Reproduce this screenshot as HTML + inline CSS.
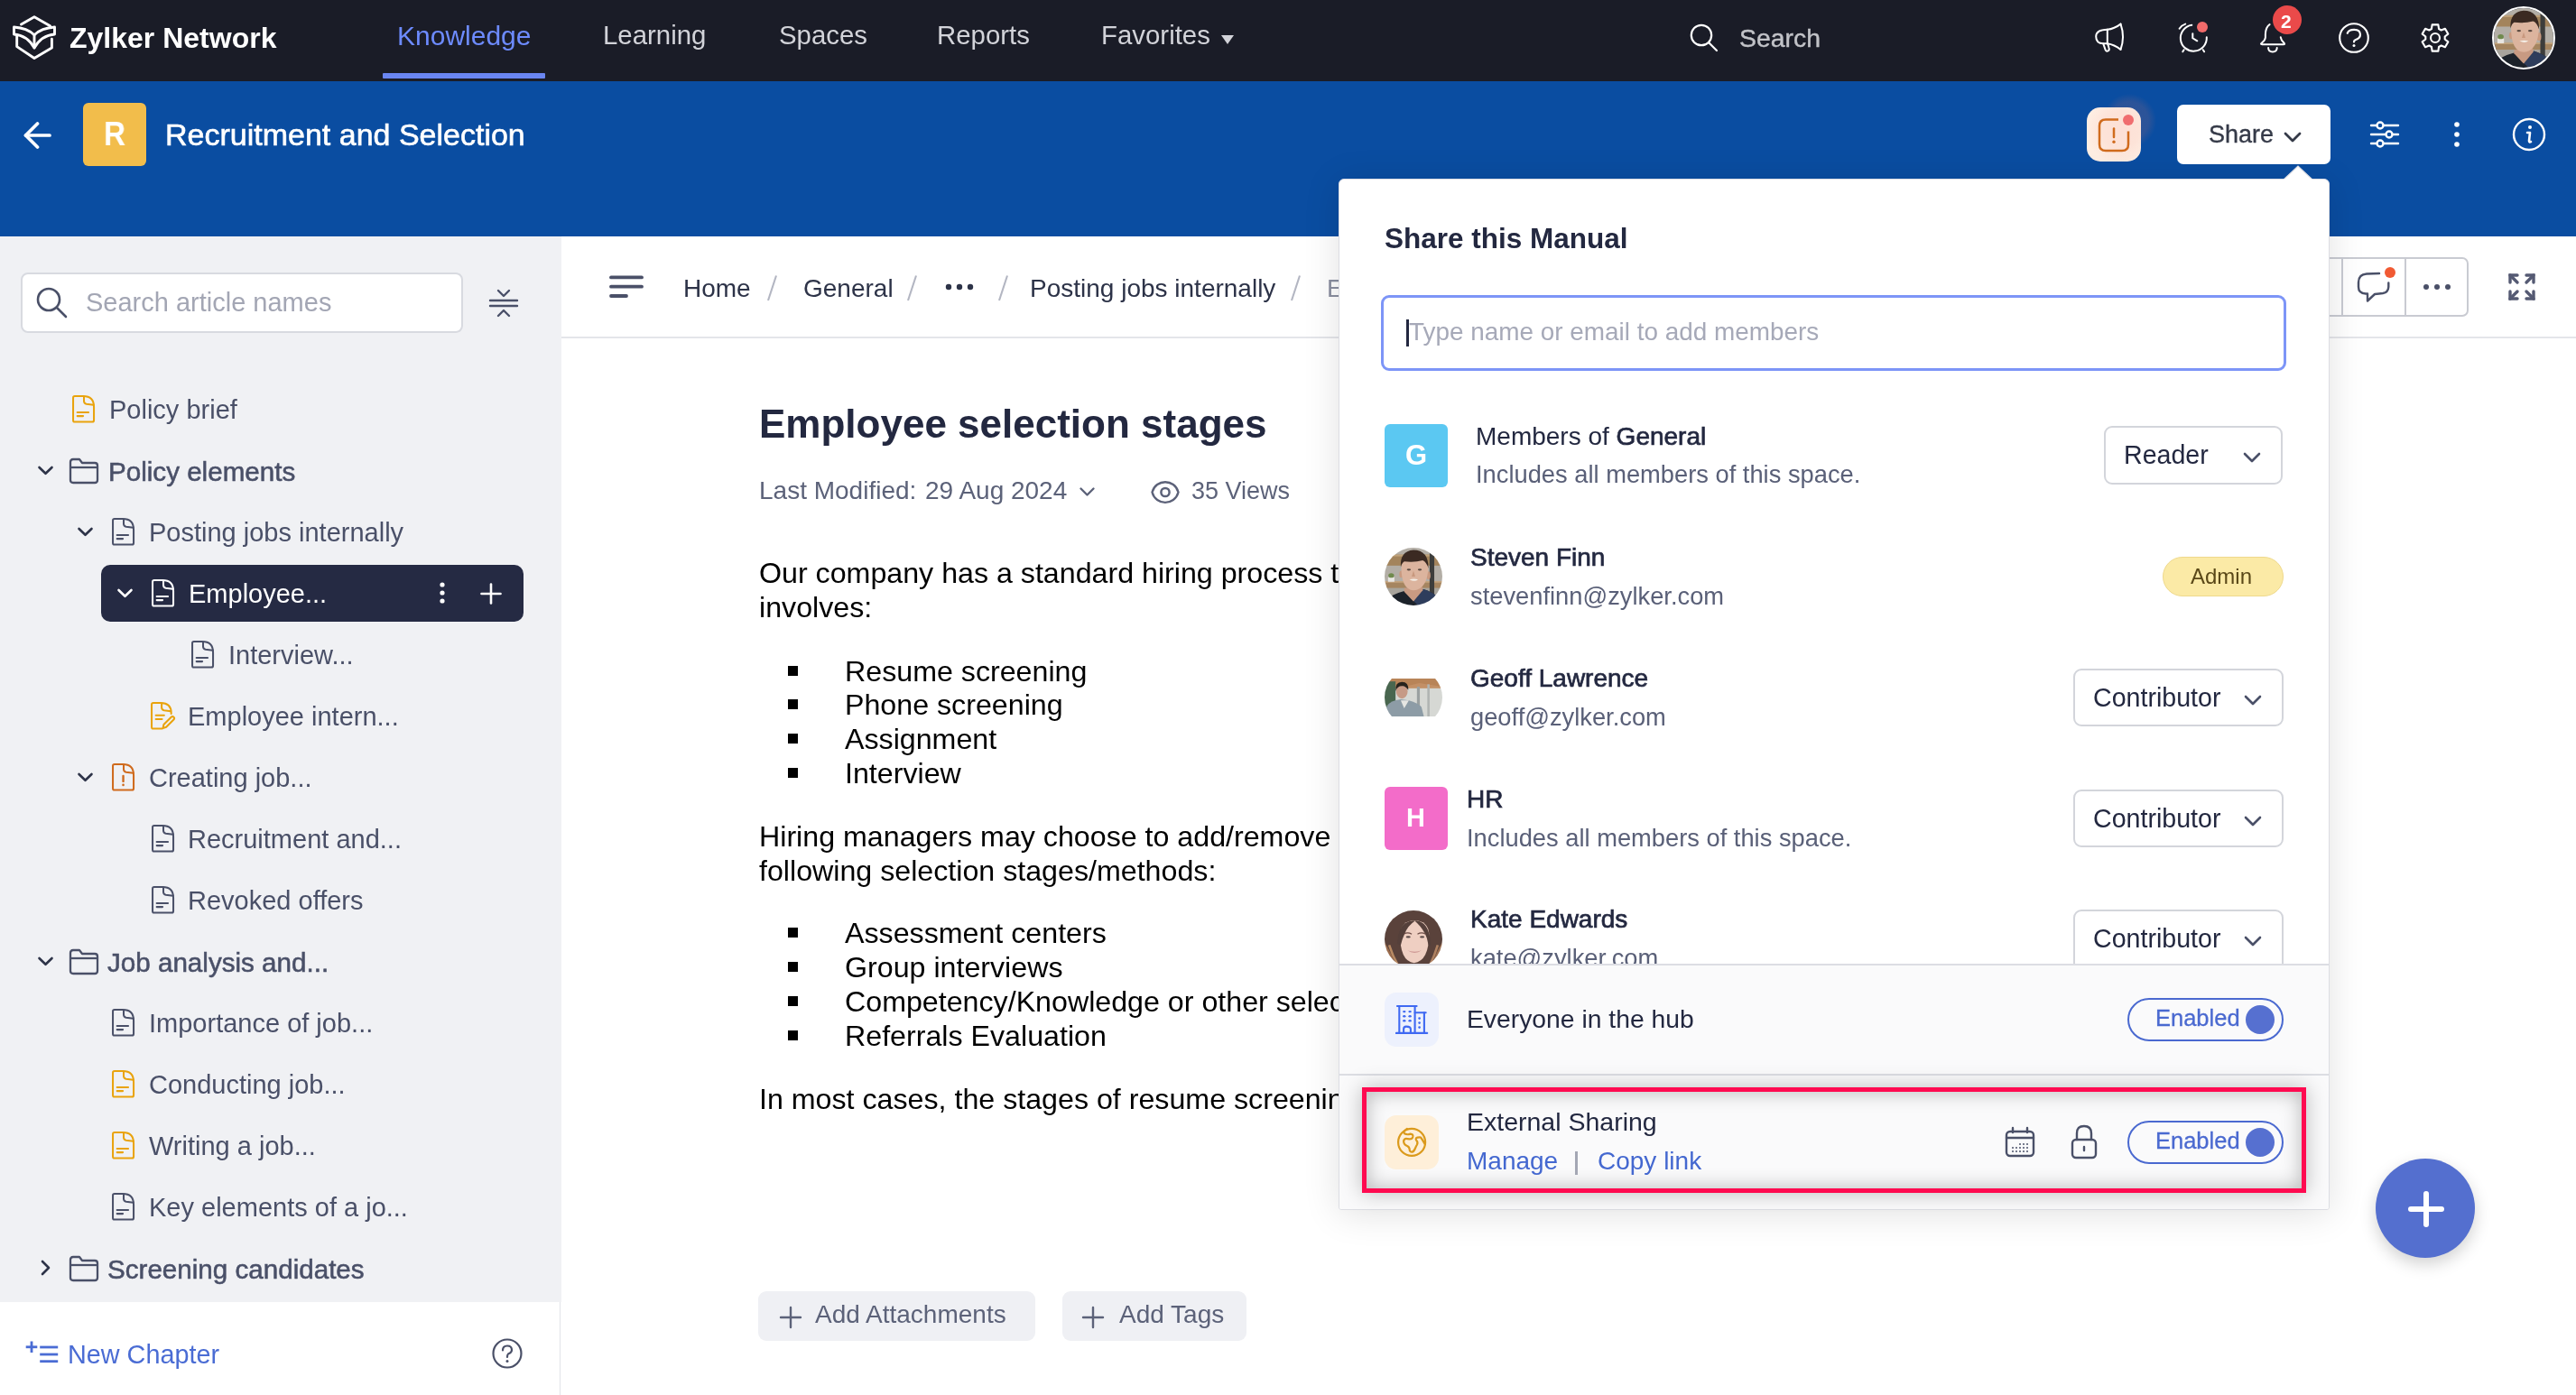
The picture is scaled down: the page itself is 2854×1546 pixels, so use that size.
<!DOCTYPE html>
<html><head><meta charset="utf-8"><style>
html,body{margin:0;padding:0;width:2854px;height:1546px;overflow:hidden;background:#fff;font-family:"Liberation Sans", sans-serif}
.t{position:absolute;white-space:nowrap;will-change:transform}
.r{position:absolute}
</style></head><body>
<div class="r" style="left:0px;top:0px;width:2854px;height:90px;background:#1a1c27"></div><svg class="r" style="left:0px;top:0px;" width="80" height="80" viewBox="0 0 80 80" fill="none"><g stroke="#fff" stroke-width="2.9" stroke-linejoin="round" stroke-linecap="round">
<path d="M23.5 27 L38 18.7 L55.5 28.8"/>
<path d="M15.5 30 L15.5 38 Q30 39 38 53 Q46 39 60.5 38 L60.5 30 Q46 31 38 38.7 Q30 31 15.5 30 Z"/>
<path d="M38 38.7 L38 53"/>
<path d="M18.7 40 L18.7 51.6 L38 64.5 L57.4 53 L57.4 43.2"/>
</g></svg><div class="t" style="left:77px;top:25.8px;font-size:32px;line-height:32px;color:#ffffff;font-weight:700;">Zylker Network</div><div class="t" style="left:440px;top:24.5px;font-size:30px;line-height:30px;color:#6d8bff;font-weight:400;">Knowledge</div><div class="r" style="left:424px;top:81px;width:180px;height:6px;background:#6a86f2;border-radius:1px"></div><div class="t" style="left:668px;top:24.0px;font-size:29.4px;line-height:29.4px;color:#d2d3d9;font-weight:400;">Learning</div><div class="t" style="left:863px;top:24.0px;font-size:29.4px;line-height:29.4px;color:#d2d3d9;font-weight:400;">Spaces</div><div class="t" style="left:1038px;top:24.0px;font-size:29.4px;line-height:29.4px;color:#d2d3d9;font-weight:400;">Reports</div><div class="t" style="left:1220px;top:24.0px;font-size:29.4px;line-height:29.4px;color:#d2d3d9;font-weight:400;">Favorites</div><svg class="r" style="left:1353px;top:39px;" width="14" height="10" viewBox="0 0 14 10" fill="none"><path d="M0 0 L14 0 L7 10 Z" fill="#d2d3d9"/></svg><svg class="r" style="left:1871px;top:25px;" width="34" height="34" viewBox="0 0 34 34" fill="none"><circle cx="14" cy="14" r="11.2" stroke="#fff" stroke-width="2.2"/><path d="M22 22 L31 31" stroke="#fff" stroke-width="2.2" stroke-linecap="round"/></svg><div class="t" style="left:1927px;top:27.9px;font-size:28.4px;line-height:28.4px;color:#c2c3c8;font-weight:400;-webkit-text-stroke:0.4px #c2c3c8;">Search</div><svg class="r" style="left:2318px;top:22px;" width="40" height="40" viewBox="0 0 40 40" fill="none"><g stroke="#fff" stroke-width="2" stroke-linejoin="round" stroke-linecap="round"><path d="M16.8 10.7 Q4.2 10.9 4.2 18.6 Q4.2 26.3 12.3 26.3 L16.8 26.3"/><path d="M16.8 10.7 L16.8 26.3"/><path d="M16.8 10.7 Q24.5 10 31.5 4.6"/><path d="M31.5 4.6 Q36.5 18.8 31.5 32.9"/><path d="M16.8 26.3 Q24.5 27.5 31.5 32.9"/><path d="M12.3 26.6 L14.6 33.2 Q15.6 35.4 17.6 34.4 Q19.4 33.4 18.5 31 L17.2 26.6"/></g></svg><svg class="r" style="left:2410px;top:22px;" width="40" height="40" viewBox="0 0 40 40" fill="none"><g stroke="#fff" stroke-width="2" stroke-linecap="round" fill="none"><path d="M18.3 5.8 A14.5 14.5 0 1 0 34.8 19.3"/><path d="M4.6 9.7 Q7 6 11.2 4.6"/><path d="M19.3 15.2 L19.3 20.3 L24.3 23.3"/><path d="M9.6 33.2 L8.3 35.3"/><path d="M30.8 33.2 L32.1 35.3"/></g><circle cx="30" cy="8" r="6" fill="#f26b6b"/></svg><svg class="r" style="left:2500px;top:22px;" width="40" height="40" viewBox="0 0 40 40" fill="none"><g stroke="#fff" stroke-width="2" stroke-linecap="round" stroke-linejoin="round" fill="none"><path d="M14.6 5.1 Q10.2 8 9.9 16 L9.9 19.5 Q9.6 22.8 6.2 25.2 Q3.6 27.3 6.4 27.3 L29.6 27.3 Q32.4 27.3 30 25 Q27.2 22.2 26.8 19.3"/><path d="M13.1 31 Q13.1 35.4 17.9 35.4 Q22.7 35.4 22.7 31"/></g></svg><div class="r" style="left:2518px;top:6px;width:32px;height:32px;background:#ea4a4a;border-radius:50%"></div><div class="t" style="left:2527px;top:13.2px;font-size:21px;line-height:21px;color:#fff;font-weight:700;">2</div><svg class="r" style="left:2589px;top:23px;" width="38" height="38" viewBox="0 0 38 38" fill="none"><circle cx="19" cy="19" r="15.8" stroke="#fff" stroke-width="2.1"/><path d="M11.7 13.8 Q13 9.8 19.2 9.8 Q26 9.8 26 15.3 Q26 19.5 20.5 21.3 Q19 22 19 23.5" stroke="#fff" stroke-width="2.2" stroke-linecap="round" fill="none"/><circle cx="19" cy="27.6" r="1.5" fill="#fff"/></svg><svg class="r" style="left:2680px;top:24px;" width="36" height="36" viewBox="0 0 36 36" fill="none"><path d="M13.95 7.99 L14.63 3.38 L21.37 3.38 L22.05 7.99 L24.65 9.49 L28.97 7.77 L32.34 13.61 L28.69 16.50 L28.69 19.50 L32.34 22.39 L28.97 28.23 L24.65 26.51 L22.05 28.01 L21.37 32.62 L14.63 32.62 L13.95 28.01 L11.35 26.51 L7.03 28.23 L3.66 22.39 L7.31 19.50 L7.31 16.50 L3.66 13.61 L7.03 7.77 L11.35 9.49 Z" stroke="#fff" stroke-width="2.1" stroke-linejoin="round" fill="none"/><circle cx="18" cy="18" r="5" stroke="#fff" stroke-width="2.1" fill="none"/></svg><svg width="0" height="0" style="position:absolute"><defs>
<clipPath id="cc100"><circle cx="50" cy="50" r="50"/></clipPath><filter id="soft" x="-5%" y="-5%" width="110%" height="110%"><feGaussianBlur stdDeviation="1.1"/></filter>
<symbol id="steven" viewBox="0 0 100 100"><g clip-path="url(#cc100)"><g filter="url(#soft)">
<rect width="100" height="100" fill="#b3aea6"/>
<rect x="0" y="12" width="100" height="19" fill="#a3845c"/>
<rect x="0" y="12" width="100" height="3" fill="#c0a27a"/>
<rect x="0" y="59" width="100" height="11" fill="#a58560"/>
<rect x="0" y="58" width="100" height="2.5" fill="#c4a47c"/>
<rect x="0" y="70" width="100" height="30" fill="#a8a49c"/>
<rect x="6" y="51" width="11" height="8" fill="#e8e6e2"/>
<ellipse cx="11.5" cy="48" rx="5" ry="4" fill="#6f8a4e"/>
<rect x="78" y="6" width="8" height="82" fill="#3e3d3b"/>
<path d="M13 100 L13 83 Q22 78 34 75 L50 92 L67 72 Q80 76 88 82 L92 100 Z" fill="#1d2029"/>
<path d="M50 92 L67 72 Q80 76 88 82 L92 100 L58 100 Z" fill="#2f3d5c"/>
<path d="M34 70 L34 76 L50 93 L66 74 L66 68 Z" fill="#c89a82"/>
<ellipse cx="29" cy="46" rx="3.5" ry="6" fill="#c99a80"/>
<ellipse cx="76" cy="48" rx="3.5" ry="7" fill="#c99a80"/>
<path d="M29 30 Q28 72 50 74 Q74 73 76 32 Q74 20 52 20 Q31 20 29 30 Z" fill="#dcb49e"/>
<path d="M28 34 Q26 6 50 4 Q76 4 76 36 Q72 24 66 22 Q52 26 34 24 Q30 26 28 34 Z" fill="#3a2c24"/>
<ellipse cx="42" cy="38" rx="3.5" ry="1.8" fill="#5a4a40"/>
<ellipse cx="61" cy="38" rx="3.5" ry="1.8" fill="#5a4a40"/>
<path d="M50 40 L47 50 L53 50 Z" fill="#c8987e"/>
<path d="M43 55 Q51 53 58 55 Q52 60 43 55 Z" fill="#f4eee6"/>
</g></g></symbol>
<symbol id="kate" viewBox="0 0 100 100"><g clip-path="url(#cc100)"><g filter="url(#soft)">
<rect width="100" height="100" fill="#5a433b"/>
<path d="M0 55 Q10 70 22 100 L0 100 Z" fill="#9a6c4e"/>
<path d="M100 55 Q90 70 80 100 L100 100 Z" fill="#9c7052"/>
<path d="M8 60 Q14 80 26 100" stroke="#b88a64" stroke-width="4" fill="none"/>
<path d="M92 60 Q86 80 76 100" stroke="#b08262" stroke-width="4" fill="none"/>
<path d="M27 40 Q26 88 51 91 Q77 88 77 40 Q75 18 52 17 Q29 18 27 40 Z" fill="#efcfc2"/>
<path d="M22 58 Q24 30 36 22 Q46 16 53 18 Q40 26 34 42 Q30 50 28 60 Z" fill="#54403a"/>
<path d="M80 60 Q78 30 66 22 Q58 16 52 18 Q62 26 70 40 Q74 48 76 60 Z" fill="#54403a"/>
<path d="M33 41 Q40 37 47 41" stroke="#6a4a44" stroke-width="2" fill="none"/>
<path d="M57 41 Q64 37 71 41" stroke="#6a4a44" stroke-width="2" fill="none"/>
<ellipse cx="41" cy="46" rx="4" ry="1.8" fill="#5a4a48"/>
<ellipse cx="65" cy="46" rx="4" ry="1.8" fill="#5a4a48"/>
<path d="M40 69 Q52 74 64 69 Q52 77 40 69 Z" fill="#c48686"/>
</g></g></symbol>
<symbol id="geoff" viewBox="0 0 100 66" preserveAspectRatio="none"><g clip-path="url(#cc100g)"><g filter="url(#soft)">
<rect width="100" height="66" fill="#d6d8d4"/>
<rect x="0" y="0" width="100" height="17" fill="#c39066"/>
<path d="M0 10 Q30 18 60 8 L100 14 L100 0 L0 0 Z" fill="#b88458"/>
<rect x="0" y="5" width="19" height="45" fill="#4a6650"/>
<rect x="56" y="14" width="5" height="52" fill="#9aa0a0"/>
<rect x="74" y="10" width="4" height="56" fill="#b0b4b2"/>
<path d="M2 66 L4 48 Q10 38 28 36 L42 38 Q58 42 64 50 L68 66 Z" fill="#8d9ca6"/>
<path d="M28 38 L34 52 L42 38 Z" fill="#e6e6e2"/>
<ellipse cx="30" cy="22" rx="10" ry="13" fill="#c69a86"/>
<path d="M19 22 Q18 6 30 6 Q42 6 41 20 Q36 12 30 13 Q22 13 19 22 Z" fill="#26221f"/>
</g></g></symbol>
<clipPath id="cc100g"><circle cx="50" cy="33" r="50"/></clipPath>
</defs></svg><svg class="r" style="left:2763px;top:9px" width="66" height="66" viewBox="0 0 100 100"><use href="#steven"/></svg><div class="r" style="left:2761px;top:7px;width:70px;height:70px;border:2.2px solid #fff;border-radius:50%;box-sizing:border-box"></div><div class="r" style="left:0px;top:90px;width:2854px;height:172px;background:#0a4da1"></div><svg class="r" style="left:25px;top:135px;" width="34" height="30" viewBox="0 0 34 30" fill="none"><g stroke="#fff" stroke-width="3.7" stroke-linecap="round" stroke-linejoin="round"><path d="M3.5 15 L30 15"/><path d="M16.5 2 L3.5 15 L16.5 28"/></g></svg><div class="r" style="left:92px;top:114px;width:70px;height:70px;background:#f2bd4b;border-radius:6px"></div><div class="t" style="left:114.5px;top:129.6px;font-size:37px;line-height:37px;color:#fff;font-weight:700;transform:scaleX(0.9);transform-origin:0 0;">R</div><div class="t" style="left:183px;top:132.1px;font-size:34px;line-height:34px;color:#fff;font-weight:400;-webkit-text-stroke:0.6px #fff;">Recruitment and Selection</div><div class="r" style="left:2329px;top:104px;width:60px;height:60px;border-radius:50%;background:radial-gradient(circle, rgba(130,100,130,0.3) 0%, rgba(130,100,130,0.28) 50%, rgba(130,100,130,0) 71%)"></div><div class="r" style="left:2312px;top:119px;width:60px;height:60px;background:radial-gradient(circle at 62% 42%, #fde0d6 0%, #fde3d8 40%, #feeee3 75%);border-radius:15px"></div><svg class="r" style="left:2322px;top:128px;" width="40" height="44" viewBox="0 0 40 44" fill="none"><path d="M25 4.5 L11 4.5 Q4 4.5 4 11.5 L4 32 Q4 39 11 39 L29 39 Q36 39 36 32 L36 17.5" stroke="#d06b1d" stroke-width="2.5" stroke-linecap="butt"/><path d="M20 14.5 L20 24" stroke="#d06b1d" stroke-width="2.5" stroke-linecap="round"/><circle cx="20" cy="29.2" r="1.7" fill="#d06b1d"/></svg><div class="r" style="left:2352px;top:127px;width:12px;height:12px;background:#f06d6f;border-radius:50%"></div><div class="r" style="left:2412px;top:116px;width:170px;height:66px;background:#fff;border-radius:7px;z-index:5"></div><div class="t" style="left:2447px;top:135.6px;font-size:27px;line-height:27px;color:#353a48;font-weight:400;-webkit-text-stroke:0.35px #353a48;z-index:6">Share</div><svg class="r" style="left:2529px;top:145px;z-index:6" width="22" height="14" viewBox="0 0 22 14" fill="none"><path d="M3 3 L11 11 L19 3" stroke="#353a48" stroke-width="2.8" stroke-linecap="round" stroke-linejoin="round"/></svg><svg class="r" style="left:2625px;top:132px;" width="34" height="34" viewBox="0 0 34 34" fill="none"><g stroke="#fff" stroke-width="2.4" stroke-linecap="round"><path d="M2 7 L32 7"/><path d="M2 17 L32 17"/><path d="M2 27 L32 27"/></g><g fill="#0a4da1" stroke="#fff" stroke-width="2.4"><circle cx="12" cy="7" r="3.5"/><circle cx="22" cy="17" r="3.5"/><circle cx="12" cy="27" r="3.5"/></g></svg><svg class="r" style="left:2716px;top:133px;" width="12" height="32" viewBox="0 0 12 32" fill="none"><g fill="#fff"><circle cx="6" cy="5" r="2.8"/><circle cx="6" cy="16" r="2.8"/><circle cx="6" cy="27" r="2.8"/></g></svg><svg class="r" style="left:2782px;top:129px;" width="40" height="40" viewBox="0 0 40 40" fill="none"><circle cx="20" cy="20" r="17" stroke="#fff" stroke-width="2.4"/><circle cx="21" cy="12" r="2" fill="#fff"/><path d="M18 18 L21 18 L20 27 Q20 29 22 28" stroke="#fff" stroke-width="2.6" stroke-linecap="round" stroke-linejoin="round"/></svg><div class="r" style="left:0px;top:262px;width:622px;height:1181px;background:#f0f1f4"></div><div class="r" style="left:23px;top:302px;width:490px;height:67px;background:#fff;border:2px solid #d8dae0;border-radius:8px;box-sizing:border-box"></div><svg class="r" style="left:39px;top:317px;" width="38" height="38" viewBox="0 0 38 38" fill="none"><circle cx="15" cy="15" r="12" stroke="#4a5068" stroke-width="2.6"/><path d="M24 24 L34 34" stroke="#4a5068" stroke-width="2.6" stroke-linecap="round"/></svg><div class="t" style="left:95px;top:321.4px;font-size:29px;line-height:29px;color:#a3a6b4;font-weight:400;">Search article names</div><svg class="r" style="left:540px;top:319px;" width="36" height="34" viewBox="0 0 36 34" fill="none"><g stroke="#4a5068" stroke-width="2.4" stroke-linecap="round" stroke-linejoin="round"><path d="M3 14 L33 14"/><path d="M3 20 L33 20"/><path d="M12 3 L18 9 L24 3"/><path d="M12 31 L18 25 L24 31"/></g></svg><svg class="r" style="left:77.5px;top:436px" width="36" height="38" viewBox="-3.3 -3.3 39.1 41.3" fill="none"><g stroke="#e9a30c" stroke-width="2.2" stroke-linejoin="round" stroke-linecap="round"><path d="M2 0 L12 0 Q25 0 25 13 L25 29 Q25 31 23 31 L2 31 Q0 31 0 29 L0 2 Q0 0 2 0 Z"/><path d="M13 0.5 L13 6 Q13 9 16 9.5 L24.5 10.5"/><path d="M5 19.5 L18.5 19.5"/><path d="M5 24 L12 24"/></g></svg><div class="t" style="left:121px;top:440.4px;font-size:29px;line-height:29px;color:#4a5068;font-weight:400;">Policy brief</div><svg class="r" style="left:41px;top:516px;" width="19" height="12" viewBox="0 0 19 12" fill="none"><path d="M2.5 2 L9.5 8.8 L16.5 2" stroke="#2d3348" stroke-width="2.6" stroke-linecap="round" stroke-linejoin="round"/></svg><svg class="r" style="left:76px;top:507px;" width="34" height="30" viewBox="0 0 34 30" fill="none"><g stroke="#4a5068" stroke-width="2.3" stroke-linejoin="round"><path d="M2 5 Q2 2 5 2 L12 2 L15 6 L29 6 Q32 6 32 9 L32 25 Q32 28 29 28 L5 28 Q2 28 2 25 Z"/><path d="M2 11 L32 11"/></g></svg><div class="t" style="left:120px;top:507.8px;font-size:29.6px;line-height:29.6px;color:#4a5068;font-weight:400;-webkit-text-stroke:0.55px #4a5068;">Policy elements</div><svg class="r" style="left:85px;top:584px;" width="19" height="12" viewBox="0 0 19 12" fill="none"><path d="M2.5 2 L9.5 8.8 L16.5 2" stroke="#2d3348" stroke-width="2.6" stroke-linecap="round" stroke-linejoin="round"/></svg><svg class="r" style="left:121.5px;top:572px" width="36" height="38" viewBox="-3.3 -3.3 39.1 41.3" fill="none"><g stroke="#4a5068" stroke-width="2.2" stroke-linejoin="round" stroke-linecap="round"><path d="M2 0 L12 0 Q25 0 25 13 L25 29 Q25 31 23 31 L2 31 Q0 31 0 29 L0 2 Q0 0 2 0 Z"/><path d="M13 0.5 L13 6 Q13 9 16 9.5 L24.5 10.5"/><path d="M5 19.5 L18.5 19.5"/><path d="M5 24 L12 24"/></g></svg><div class="t" style="left:165px;top:576.4px;font-size:29px;line-height:29px;color:#4a5068;font-weight:400;">Posting jobs internally</div><div class="r" style="left:112px;top:626px;width:468px;height:63px;background:#252a43;border-radius:10px"></div><svg class="r" style="left:129px;top:652px;" width="19" height="12" viewBox="0 0 19 12" fill="none"><path d="M2.5 2 L9.5 8.8 L16.5 2" stroke="#fff" stroke-width="2.6" stroke-linecap="round" stroke-linejoin="round"/></svg><svg class="r" style="left:165.5px;top:640px" width="36" height="38" viewBox="-3.3 -3.3 39.1 41.3" fill="none"><g stroke="#fff" stroke-width="2.2" stroke-linejoin="round" stroke-linecap="round"><path d="M2 0 L12 0 Q25 0 25 13 L25 29 Q25 31 23 31 L2 31 Q0 31 0 29 L0 2 Q0 0 2 0 Z"/><path d="M13 0.5 L13 6 Q13 9 16 9.5 L24.5 10.5"/><path d="M5 19.5 L18.5 19.5"/><path d="M5 24 L12 24"/></g></svg><div class="t" style="left:209px;top:644.4px;font-size:29px;line-height:29px;color:#fff;font-weight:400;">Employee...</div><svg class="r" style="left:484px;top:644px;" width="12" height="30" viewBox="0 0 12 30" fill="none"><g fill="#fff"><circle cx="6" cy="4" r="2.6"/><circle cx="6" cy="13" r="2.6"/><circle cx="6" cy="22" r="2.6"/></g></svg><svg class="r" style="left:530px;top:644px;" width="28" height="28" viewBox="0 0 28 28" fill="none"><g stroke="#fff" stroke-width="2.6" stroke-linecap="round"><path d="M14 3.5 L14 24.5"/><path d="M3.5 14 L24.5 14"/></g></svg><svg class="r" style="left:209.5px;top:708px" width="36" height="38" viewBox="-3.3 -3.3 39.1 41.3" fill="none"><g stroke="#4a5068" stroke-width="2.2" stroke-linejoin="round" stroke-linecap="round"><path d="M2 0 L12 0 Q25 0 25 13 L25 29 Q25 31 23 31 L2 31 Q0 31 0 29 L0 2 Q0 0 2 0 Z"/><path d="M13 0.5 L13 6 Q13 9 16 9.5 L24.5 10.5"/><path d="M5 19.5 L18.5 19.5"/><path d="M5 24 L12 24"/></g></svg><div class="t" style="left:253px;top:712.4px;font-size:29px;line-height:29px;color:#4a5068;font-weight:400;">Interview...</div><svg class="r" style="left:164.5px;top:776px" width="36" height="38" viewBox="-3.3 -3.3 39.1 41.3" fill="none"><g stroke="#e9a30c" stroke-width="2.2" stroke-linejoin="round" stroke-linecap="round"><path d="M12.5 31 L2 31 Q0 31 0 29 L0 2 Q0 0 2 0 L11 0 Q23.5 0 23.5 12 L23.5 13"/><path d="M12 0.5 L12 5.5 Q12 8.5 15 9 L23 10"/><path d="M5 15 L15 15"/><path d="M5 19.5 L12.5 19.5"/><path d="M13.5 30.5 L14.5 26 L23.5 17 Q25 15.5 26.5 17 Q28 18.5 26.5 20 L17.5 29 Z"/></g></svg><div class="t" style="left:208px;top:780.4px;font-size:29px;line-height:29px;color:#4a5068;font-weight:400;">Employee intern...</div><svg class="r" style="left:85px;top:856px;" width="19" height="12" viewBox="0 0 19 12" fill="none"><path d="M2.5 2 L9.5 8.8 L16.5 2" stroke="#2d3348" stroke-width="2.6" stroke-linecap="round" stroke-linejoin="round"/></svg><svg class="r" style="left:121.5px;top:844px" width="36" height="38" viewBox="-3.3 -3.3 39.1 41.3" fill="none"><g stroke="#cf6a1c" stroke-width="2.2" stroke-linejoin="round" stroke-linecap="round"><path d="M2 0 L12 0 Q25 0 25 13 L25 29 Q25 31 23 31 L2 31 Q0 31 0 29 L0 2 Q0 0 2 0 Z"/><path d="M13 0.5 L13 6 Q13 9 16 9.5 L24.5 10.5"/><path d="M12.5 14 L12.5 20.5" stroke-width="2.6"/><path d="M12.5 24.6 L12.5 25" stroke-width="2.8"/></g></svg><div class="t" style="left:165px;top:848.4px;font-size:29px;line-height:29px;color:#4a5068;font-weight:400;">Creating job...</div><svg class="r" style="left:165.5px;top:912px" width="36" height="38" viewBox="-3.3 -3.3 39.1 41.3" fill="none"><g stroke="#4a5068" stroke-width="2.2" stroke-linejoin="round" stroke-linecap="round"><path d="M2 0 L12 0 Q25 0 25 13 L25 29 Q25 31 23 31 L2 31 Q0 31 0 29 L0 2 Q0 0 2 0 Z"/><path d="M13 0.5 L13 6 Q13 9 16 9.5 L24.5 10.5"/><path d="M5 19.5 L18.5 19.5"/><path d="M5 24 L12 24"/></g></svg><div class="t" style="left:208px;top:916.4px;font-size:29px;line-height:29px;color:#4a5068;font-weight:400;">Recruitment and...</div><svg class="r" style="left:165.5px;top:980px" width="36" height="38" viewBox="-3.3 -3.3 39.1 41.3" fill="none"><g stroke="#4a5068" stroke-width="2.2" stroke-linejoin="round" stroke-linecap="round"><path d="M2 0 L12 0 Q25 0 25 13 L25 29 Q25 31 23 31 L2 31 Q0 31 0 29 L0 2 Q0 0 2 0 Z"/><path d="M13 0.5 L13 6 Q13 9 16 9.5 L24.5 10.5"/><path d="M5 19.5 L18.5 19.5"/><path d="M5 24 L12 24"/></g></svg><div class="t" style="left:208px;top:984.4px;font-size:29px;line-height:29px;color:#4a5068;font-weight:400;">Revoked offers</div><svg class="r" style="left:41px;top:1060px;" width="19" height="12" viewBox="0 0 19 12" fill="none"><path d="M2.5 2 L9.5 8.8 L16.5 2" stroke="#2d3348" stroke-width="2.6" stroke-linecap="round" stroke-linejoin="round"/></svg><svg class="r" style="left:76px;top:1051px;" width="34" height="30" viewBox="0 0 34 30" fill="none"><g stroke="#4a5068" stroke-width="2.3" stroke-linejoin="round"><path d="M2 5 Q2 2 5 2 L12 2 L15 6 L29 6 Q32 6 32 9 L32 25 Q32 28 29 28 L5 28 Q2 28 2 25 Z"/><path d="M2 11 L32 11"/></g></svg><div class="t" style="left:119px;top:1051.8px;font-size:29.6px;line-height:29.6px;color:#4a5068;font-weight:400;-webkit-text-stroke:0.55px #4a5068;">Job analysis and...</div><svg class="r" style="left:121.5px;top:1116px" width="36" height="38" viewBox="-3.3 -3.3 39.1 41.3" fill="none"><g stroke="#4a5068" stroke-width="2.2" stroke-linejoin="round" stroke-linecap="round"><path d="M2 0 L12 0 Q25 0 25 13 L25 29 Q25 31 23 31 L2 31 Q0 31 0 29 L0 2 Q0 0 2 0 Z"/><path d="M13 0.5 L13 6 Q13 9 16 9.5 L24.5 10.5"/><path d="M5 19.5 L18.5 19.5"/><path d="M5 24 L12 24"/></g></svg><div class="t" style="left:165px;top:1120.3px;font-size:29px;line-height:29px;color:#4a5068;font-weight:400;">Importance of job...</div><svg class="r" style="left:121.5px;top:1184px" width="36" height="38" viewBox="-3.3 -3.3 39.1 41.3" fill="none"><g stroke="#e9a30c" stroke-width="2.2" stroke-linejoin="round" stroke-linecap="round"><path d="M2 0 L12 0 Q25 0 25 13 L25 29 Q25 31 23 31 L2 31 Q0 31 0 29 L0 2 Q0 0 2 0 Z"/><path d="M13 0.5 L13 6 Q13 9 16 9.5 L24.5 10.5"/><path d="M5 19.5 L18.5 19.5"/><path d="M5 24 L12 24"/></g></svg><div class="t" style="left:165px;top:1188.3px;font-size:29px;line-height:29px;color:#4a5068;font-weight:400;">Conducting job...</div><svg class="r" style="left:121.5px;top:1252px" width="36" height="38" viewBox="-3.3 -3.3 39.1 41.3" fill="none"><g stroke="#e9a30c" stroke-width="2.2" stroke-linejoin="round" stroke-linecap="round"><path d="M2 0 L12 0 Q25 0 25 13 L25 29 Q25 31 23 31 L2 31 Q0 31 0 29 L0 2 Q0 0 2 0 Z"/><path d="M13 0.5 L13 6 Q13 9 16 9.5 L24.5 10.5"/><path d="M5 19.5 L18.5 19.5"/><path d="M5 24 L12 24"/></g></svg><div class="t" style="left:165px;top:1256.3px;font-size:29px;line-height:29px;color:#4a5068;font-weight:400;">Writing a job...</div><svg class="r" style="left:121.5px;top:1320px" width="36" height="38" viewBox="-3.3 -3.3 39.1 41.3" fill="none"><g stroke="#4a5068" stroke-width="2.2" stroke-linejoin="round" stroke-linecap="round"><path d="M2 0 L12 0 Q25 0 25 13 L25 29 Q25 31 23 31 L2 31 Q0 31 0 29 L0 2 Q0 0 2 0 Z"/><path d="M13 0.5 L13 6 Q13 9 16 9.5 L24.5 10.5"/><path d="M5 19.5 L18.5 19.5"/><path d="M5 24 L12 24"/></g></svg><div class="t" style="left:165px;top:1324.3px;font-size:29px;line-height:29px;color:#4a5068;font-weight:400;">Key elements of a jo...</div><svg class="r" style="left:45px;top:1396px;" width="12" height="18" viewBox="0 0 12 18" fill="none"><path d="M2 2 L9 9 L2 16" stroke="#2d3348" stroke-width="2.6" stroke-linecap="round" stroke-linejoin="round"/></svg><svg class="r" style="left:76px;top:1391px;" width="34" height="30" viewBox="0 0 34 30" fill="none"><g stroke="#4a5068" stroke-width="2.3" stroke-linejoin="round"><path d="M2 5 Q2 2 5 2 L12 2 L15 6 L29 6 Q32 6 32 9 L32 25 Q32 28 29 28 L5 28 Q2 28 2 25 Z"/><path d="M2 11 L32 11"/></g></svg><div class="t" style="left:119px;top:1391.8px;font-size:29.6px;line-height:29.6px;color:#4a5068;font-weight:400;-webkit-text-stroke:0.55px #4a5068;">Screening candidates</div><div class="r" style="left:0px;top:1443px;width:621px;height:103px;background:#fff;border-right:1px solid #e2e3e8;box-sizing:border-box"></div><svg class="r" style="left:26px;top:1484px;" width="42" height="30" viewBox="0 0 42 30" fill="none"><g stroke="#4a6cd4" stroke-width="2.8" stroke-linecap="butt"><path d="M9 2.5 L9 15"/><path d="M2.7 8.8 L15.3 8.8"/><path d="M18.2 9 L38.2 9"/><path d="M18.2 17 L38.2 17"/><path d="M18.2 24.7 L38.2 24.7"/></g></svg><div class="t" style="left:75px;top:1486.5px;font-size:28.8px;line-height:28.8px;color:#4a6cd4;font-weight:400;">New Chapter</div><svg class="r" style="left:543px;top:1481px;" width="38" height="38" viewBox="0 0 38 38" fill="none"><circle cx="19" cy="19" r="15.5" stroke="#4a5068" stroke-width="2.2"/><path d="M14 15.5 Q14 10.5 19 10.5 Q24 10.5 24 15 Q24 18 20 19.5 Q19 20.3 19 23" stroke="#4a5068" stroke-width="2.2" stroke-linecap="round"/><circle cx="19" cy="27.5" r="1.5" fill="#4a5068"/></svg><div class="r" style="left:622px;top:373px;width:2232px;height:2px;background:#e4e5ea"></div><svg class="r" style="left:674px;top:303px;" width="40" height="32" viewBox="0 0 40 32" fill="none"><g stroke="#4a5068" stroke-width="3.8" stroke-linecap="round"><path d="M3 4.4 L37 4.4"/><path d="M3 14.7 L37 14.7"/><path d="M3 25 L20 25"/></g></svg><div class="t" style="left:757px;top:305.7px;font-size:28px;line-height:28px;color:#2d3348;font-weight:400;">Home</div><svg class="r" style="left:847px;top:303px;" width="16" height="32" viewBox="0 0 16 32" fill="none"><path d="M13 2.5 L4 30" stroke="#b3b6c2" stroke-width="2.1" stroke-linecap="butt"/></svg><div class="t" style="left:890px;top:305.7px;font-size:28px;line-height:28px;color:#2d3348;font-weight:400;">General</div><svg class="r" style="left:1002px;top:303px;" width="16" height="32" viewBox="0 0 16 32" fill="none"><path d="M13 2.5 L4 30" stroke="#b3b6c2" stroke-width="2.1" stroke-linecap="butt"/></svg><svg class="r" style="left:1046px;top:312px;" width="34" height="12" viewBox="0 0 34 12" fill="none"><g fill="#2d3348"><circle cx="5" cy="6" r="3.2"/><circle cx="17" cy="6" r="3.2"/><circle cx="29" cy="6" r="3.2"/></g></svg><svg class="r" style="left:1103px;top:303px;" width="16" height="32" viewBox="0 0 16 32" fill="none"><path d="M13 2.5 L4 30" stroke="#b3b6c2" stroke-width="2.1" stroke-linecap="butt"/></svg><div class="t" style="left:1141px;top:305.7px;font-size:28px;line-height:28px;color:#2d3348;font-weight:400;">Posting jobs internally</div><svg class="r" style="left:1427px;top:303px;" width="16" height="32" viewBox="0 0 16 32" fill="none"><path d="M13 2.5 L4 30" stroke="#b3b6c2" stroke-width="2.1" stroke-linecap="butt"/></svg><div class="t" style="left:1470px;top:305.7px;font-size:28px;line-height:28px;color:#8a8fa0;font-weight:400;">E</div><div class="r" style="left:2560px;top:285px;width:175px;height:66px;border:2px solid #c9cbd2;border-radius:7px;box-sizing:border-box;background:#fff"></div><div class="r" style="left:2594px;top:286px;width:2px;height:64px;background:#c9cbd2"></div><div class="r" style="left:2664px;top:286px;width:2px;height:64px;background:#c9cbd2"></div><svg class="r" style="left:2600px;top:290px;" width="60" height="52" viewBox="0 0 60 52" fill="none"><path d="M36 13 L22 13.5 Q13 14 13 23 L13 28 Q13 35 21 35.5 L23 35.5 L23 43.5 L31 36 Q36 35.5 40 35 Q46 34 46.3 28 L46.3 23.5" stroke="#4a5068" stroke-width="2.4" stroke-linecap="round" stroke-linejoin="round"/><circle cx="48" cy="12" r="6" fill="#f15a33"/></svg><svg class="r" style="left:2682px;top:312px;" width="36" height="12" viewBox="0 0 36 12" fill="none"><g fill="#4a5068"><circle cx="6" cy="6" r="3"/><circle cx="18" cy="6" r="3"/><circle cx="30" cy="6" r="3"/></g></svg><svg class="r" style="left:2778px;top:302px;" width="32" height="32" viewBox="0 0 32 32" fill="none"><g stroke="#555a73" stroke-width="3.4" stroke-linecap="round" stroke-linejoin="miter"><path d="M3 11 L3 3 L11 3"/><path d="M3 3 L11 11"/><path d="M21 3 L29 3 L29 11"/><path d="M29 3 L21 11"/><path d="M3 21 L3 29 L11 29"/><path d="M3 29 L11 21"/><path d="M29 21 L29 29 L21 29"/><path d="M29 29 L21 21"/></g></svg><div class="t" style="left:841px;top:447.6px;font-size:44px;line-height:44px;color:#232840;font-weight:700;">Employee selection stages</div><div class="t" style="left:841px;top:530.2px;font-size:28px;line-height:28px;color:#5c6279;font-weight:400;">Last Modified:</div><div class="t" style="left:1025px;top:530.2px;font-size:28px;line-height:28px;color:#5c6279;font-weight:400;">29 Aug 2024</div><svg class="r" style="left:1195px;top:539px;" width="20" height="14" viewBox="0 0 20 14" fill="none"><path d="M2.5 2.5 L9.5 9.5 L16.5 2.5" stroke="#5c6279" stroke-width="2.4" stroke-linecap="round" stroke-linejoin="round"/></svg><svg class="r" style="left:1274px;top:532px;" width="36" height="28" viewBox="0 0 36 28" fill="none"><path d="M2.5 13.5 C6.5 -1.6, 27.5 -1.6, 31.5 13.5 C27.5 28.6, 6.5 28.6, 2.5 13.5 Z" stroke="#5c6279" stroke-width="2.4" stroke-linejoin="round"/><circle cx="17" cy="13.5" r="4.6" stroke="#5c6279" stroke-width="2.5"/></svg><div class="t" style="left:1320px;top:531.0px;font-size:27px;line-height:27px;color:#5c6279;font-weight:400;">35 Views</div><div class="t" style="left:841px;top:618.6px;font-size:32.2px;line-height:32.2px;color:#000;font-weight:400;">Our company has a standard hiring process that the hiring team</div><div class="t" style="left:841px;top:656.6px;font-size:32.2px;line-height:32.2px;color:#000;font-weight:400;">involves:</div><div class="r" style="left:873px;top:738px;width:11px;height:11px;background:#000"></div><div class="t" style="left:936px;top:727.6px;font-size:32.2px;line-height:32.2px;color:#000;font-weight:400;">Resume screening</div><div class="r" style="left:873px;top:775px;width:11px;height:11px;background:#000"></div><div class="t" style="left:936px;top:764.6px;font-size:32.2px;line-height:32.2px;color:#000;font-weight:400;">Phone screening</div><div class="r" style="left:873px;top:813px;width:11px;height:11px;background:#000"></div><div class="t" style="left:936px;top:802.6px;font-size:32.2px;line-height:32.2px;color:#000;font-weight:400;">Assignment</div><div class="r" style="left:873px;top:851px;width:11px;height:11px;background:#000"></div><div class="t" style="left:936px;top:840.6px;font-size:32.2px;line-height:32.2px;color:#000;font-weight:400;">Interview</div><div class="t" style="left:841px;top:910.6px;font-size:32.2px;line-height:32.2px;color:#000;font-weight:400;">Hiring managers may choose to add/remove stages from the</div><div class="t" style="left:841px;top:948.6px;font-size:32.2px;line-height:32.2px;color:#000;font-weight:400;">following selection stages/methods:</div><div class="r" style="left:873px;top:1028px;width:11px;height:11px;background:#000"></div><div class="t" style="left:936px;top:1017.6px;font-size:32.2px;line-height:32.2px;color:#000;font-weight:400;">Assessment centers</div><div class="r" style="left:873px;top:1066px;width:11px;height:11px;background:#000"></div><div class="t" style="left:936px;top:1055.6px;font-size:32.2px;line-height:32.2px;color:#000;font-weight:400;">Group interviews</div><div class="r" style="left:873px;top:1104px;width:11px;height:11px;background:#000"></div><div class="t" style="left:936px;top:1093.6px;font-size:32.2px;line-height:32.2px;color:#000;font-weight:400;">Competency/Knowledge or other selection tests</div><div class="r" style="left:873px;top:1142px;width:11px;height:11px;background:#000"></div><div class="t" style="left:936px;top:1131.6px;font-size:32.2px;line-height:32.2px;color:#000;font-weight:400;">Referrals Evaluation</div><div class="t" style="left:841px;top:1201.6px;font-size:32.2px;line-height:32.2px;color:#000;font-weight:400;">In most cases, the stages of resume screening and interview are</div><div class="r" style="left:840px;top:1431px;width:307px;height:55px;background:#eff0f4;border-radius:9px"></div><svg class="r" style="left:863px;top:1447px;" width="26" height="26" viewBox="0 0 26 26" fill="none"><g stroke="#5c6279" stroke-width="2.4" stroke-linecap="round"><path d="M13 2 L13 24"/><path d="M2 13 L24 13"/></g></svg><div class="t" style="left:903px;top:1443.2px;font-size:28px;line-height:28px;color:#5c6279;font-weight:400;">Add Attachments</div><div class="r" style="left:1177px;top:1431px;width:204px;height:55px;background:#eff0f4;border-radius:9px"></div><svg class="r" style="left:1198px;top:1447px;" width="26" height="26" viewBox="0 0 26 26" fill="none"><g stroke="#5c6279" stroke-width="2.4" stroke-linecap="round"><path d="M13 2 L13 24"/><path d="M2 13 L24 13"/></g></svg><div class="t" style="left:1240px;top:1443.2px;font-size:28px;line-height:28px;color:#5c6279;font-weight:400;">Add Tags</div><div class="r" style="left:2632px;top:1284px;width:110px;height:110px;background:#546fcf;border-radius:50%;box-shadow:0 7px 18px rgba(0,0,0,0.18)"></div><svg class="r" style="left:2666px;top:1318px;" width="44" height="44" viewBox="0 0 44 44" fill="none"><g stroke="#fff" stroke-width="6" stroke-linecap="round"><path d="M22 5 L22 39"/><path d="M5 22 L39 22"/></g></svg><div class="r" style="left:1483px;top:198px;width:1098px;height:1143px;background:#fff;border:1px solid #dcdde3;border-radius:6px 6px 3px 3px;box-sizing:border-box;box-shadow:0 4px 40px rgba(0,0,0,0.12)"></div><svg class="r" style="left:2530px;top:183px;" width="32" height="17" viewBox="0 0 32 17" fill="none"><path d="M0 16 L16 1 L32 16" fill="#fff" stroke="#dcdde3" stroke-width="1.2"/><rect x="0" y="15.5" width="32" height="2" fill="#fff"/></svg><div class="t" style="left:1534px;top:249.2px;font-size:31.5px;line-height:31.5px;color:#232840;font-weight:700;">Share this Manual</div><div class="r" style="left:1530px;top:327px;width:1003px;height:84px;border:3px solid #7d95f7;border-radius:9px;box-sizing:border-box;background:#fff"></div><div class="r" style="left:1558px;top:354px;width:3px;height:30px;background:#232840"></div><div class="t" style="left:1561px;top:354.3px;font-size:27.9px;line-height:27.9px;color:#a6a9b8;font-weight:400;">Type name or email to add members</div><div class="r" style="left:1483px;top:420px;width:1097px;height:648px;overflow:hidden"><div class="r" style="left:51px;top:50px;width:70px;height:70px;background:#5bc8f2;border-radius:6px"></div><div class="t" style="left:74px;top:69.2px;font-size:31px;line-height:31px;color:#fff;font-weight:700;">G</div><div class="t" style="left:152px;top:50.2px;font-size:28px;line-height:28px;color:#232840;font-weight:400;">Members of <span style="-webkit-text-stroke:0.7px #232840">General</span></div><div class="t" style="left:152px;top:91.8px;font-size:27.3px;line-height:27.3px;color:#5a6078;font-weight:400;">Includes all members of this space.</div><div class="r" style="left:51px;top:187px;width:64px;height:64px;"></div><div class="r" style="left:51px;top:452px;width:70px;height:70px;background:#f36cc9;border-radius:6px"></div><div class="t" style="left:75px;top:472.4px;font-size:29px;line-height:29px;color:#fff;font-weight:700;">H</div><div class="t" style="left:142px;top:452.2px;font-size:28px;line-height:28px;color:#232840;font-weight:400;-webkit-text-stroke:0.7px #232840;">HR</div><div class="t" style="left:142px;top:494.8px;font-size:27.3px;line-height:27.3px;color:#5a6078;font-weight:400;">Includes all members of this space.</div><div class="t" style="left:146px;top:184.2px;font-size:28px;line-height:28px;color:#232840;font-weight:400;-webkit-text-stroke:0.7px #232840;">Steven Finn</div><div class="t" style="left:146px;top:226.8px;font-size:27.3px;line-height:27.3px;color:#5a6078;font-weight:400;">stevenfinn@zylker.com</div><div class="t" style="left:146px;top:318.2px;font-size:28px;line-height:28px;color:#232840;font-weight:400;-webkit-text-stroke:0.7px #232840;">Geoff Lawrence</div><div class="t" style="left:146px;top:360.8px;font-size:27.3px;line-height:27.3px;color:#5a6078;font-weight:400;">geoff@zylker.com</div><div class="t" style="left:146px;top:585.2px;font-size:28px;line-height:28px;color:#232840;font-weight:400;-webkit-text-stroke:0.7px #232840;">Kate Edwards</div><div class="t" style="left:146px;top:627.8px;font-size:27.3px;line-height:27.3px;color:#5a6078;font-weight:400;">kate@zylker.com</div></div><svg class="r" style="left:1534px;top:607px" width="64" height="64" viewBox="0 0 100 100"><use href="#steven"/></svg><svg class="r" style="left:1534px;top:752px" width="64" height="42" viewBox="0 0 100 66" preserveAspectRatio="none"><use href="#geoff"/></svg><div class="r" style="left:1534px;top:1009px;width:64px;height:59px;overflow:hidden"><svg width="64" height="64" viewBox="0 0 100 100"><use href="#kate"/></svg></div><div class="r" style="left:2331px;top:472px;width:198px;height:65px;border:2px solid #d3d5db;border-radius:9px;box-sizing:border-box;background:#fff"></div><div class="t" style="left:2353px;top:489.7px;font-size:28.6px;line-height:28.6px;color:#232840;font-weight:400;">Reader</div><svg class="r" style="left:2484px;top:500px;" width="22" height="14" viewBox="0 0 22 14" fill="none"><path d="M3 3 L11 11 L19 3" stroke="#4a5068" stroke-width="2.6" stroke-linecap="round" stroke-linejoin="round"/></svg><div class="r" style="left:2396px;top:617px;width:134px;height:44px;background:#fbeaa6;border:1.5px solid #efd98c;border-radius:22px;box-sizing:border-box"></div><div class="t" style="left:2427px;top:626.6px;font-size:24px;line-height:24px;color:#5a4818;font-weight:400;">Admin</div><div class="r" style="left:2297px;top:741px;width:233px;height:64px;border:2px solid #d3d5db;border-radius:9px;box-sizing:border-box;background:#fff"></div><div class="t" style="left:2319px;top:758.7px;font-size:28.6px;line-height:28.6px;color:#232840;font-weight:400;">Contributor</div><svg class="r" style="left:2485px;top:769px;" width="22" height="14" viewBox="0 0 22 14" fill="none"><path d="M3 3 L11 11 L19 3" stroke="#4a5068" stroke-width="2.6" stroke-linecap="round" stroke-linejoin="round"/></svg><div class="r" style="left:2297px;top:875px;width:233px;height:64px;border:2px solid #d3d5db;border-radius:9px;box-sizing:border-box;background:#fff"></div><div class="t" style="left:2319px;top:892.7px;font-size:28.6px;line-height:28.6px;color:#232840;font-weight:400;">Contributor</div><svg class="r" style="left:2485px;top:903px;" width="22" height="14" viewBox="0 0 22 14" fill="none"><path d="M3 3 L11 11 L19 3" stroke="#4a5068" stroke-width="2.6" stroke-linecap="round" stroke-linejoin="round"/></svg><div class="r" style="left:2290px;top:1000px;width:250px;height:68px;overflow:hidden"><div class="r" style="left:7px;top:8px;width:233px;height:82px;border:2px solid #d3d5db;border-radius:9px;box-sizing:border-box;background:#fff"></div><div class="t" style="left:29px;top:25.7px;font-size:28.6px;line-height:28.6px;color:#232840;font-weight:400;">Contributor</div><svg class="r" style="left:195px;top:36px;" width="22" height="14" viewBox="0 0 22 14" fill="none"><path d="M3 3 L11 11 L19 3" stroke="#4a5068" stroke-width="2.6" stroke-linecap="round" stroke-linejoin="round"/></svg></div><div class="r" style="left:1484px;top:1068px;width:1096px;height:272px;background:#fafafb;border-radius:0 0 3px 3px"></div><div class="r" style="left:1484px;top:1068px;width:1096px;height:2px;background:#dcdde3"></div><div class="r" style="left:1484px;top:1190px;width:1096px;height:2px;background:#dcdde3"></div><div class="r" style="left:1534px;top:1100px;width:60px;height:60px;background:#edf1fd;border-radius:13px"></div><svg class="r" style="left:1546px;top:1111px;" width="38" height="38" viewBox="0 0 38 38" fill="none"><g stroke="#3f69f2" stroke-width="2.1" stroke-linecap="round" stroke-linejoin="round" fill="none"><path d="M0.8 33.9 L35.2 33.9"/><path d="M2 4 L23.6 4"/><path d="M4.3 4 L4.3 33.9"/><path d="M21.6 4 L21.6 33.9"/><path d="M21.6 11.3 L33.7 11.3"/><path d="M31.9 11.3 L31.9 33.9"/><path d="M9.1 33.9 L9.1 29.5 Q9.1 26.6 12 26.6 Q16.9 26.6 16.9 29.5 L16.9 33.9"/></g><g fill="#3f69f2"><ellipse cx="9.8" cy="10.1" rx="1.7" ry="1.2"/><ellipse cx="16.1" cy="10.1" rx="1.7" ry="1.2"/><ellipse cx="9.8" cy="15.3" rx="1.7" ry="1.2"/><ellipse cx="16.1" cy="15.3" rx="1.7" ry="1.2"/><ellipse cx="9.8" cy="20.2" rx="1.7" ry="1.2"/><ellipse cx="16.1" cy="20.2" rx="1.7" ry="1.2"/><circle cx="26.6" cy="17.6" r="1.3"/><circle cx="26.6" cy="22.6" r="1.3"/><circle cx="26.6" cy="27.6" r="1.3"/></g></svg><div class="t" style="left:1625px;top:1114.9px;font-size:28.3px;line-height:28.3px;color:#232840;font-weight:400;">Everyone in the hub</div><div class="r" style="left:2357px;top:1106px;width:173px;height:48px;border:2px solid #4a69d0;border-radius:24px;box-sizing:border-box"></div><div class="t" style="left:2388px;top:1116.3px;font-size:25.5px;line-height:25.5px;color:#4a69d0;font-weight:400;-webkit-text-stroke:0.3px #4a69d0;">Enabled</div><div class="r" style="left:2488px;top:1114px;width:32px;height:32px;background:#5670d0;border-radius:50%"></div><div class="r" style="left:1509px;top:1205px;width:1046px;height:117px;border:5px solid #ff0a50;box-sizing:border-box;box-shadow:inset 0 0 22px rgba(0,0,0,0.28), 0 0 22px rgba(0,0,0,0.25)"></div><div class="r" style="left:1534px;top:1236px;width:60px;height:60px;background:#feefd9;border-radius:13px"></div><svg class="r" style="left:1546px;top:1248px;" width="38" height="38" viewBox="0 0 38 38" fill="none"><g stroke="#db9a1c" stroke-width="2.2" stroke-linejoin="round" stroke-linecap="round" fill="none"><circle cx="18.1" cy="17.9" r="15"/><path d="M12.9 2.8 Q8 6 10 8.3 Q13 10 16.6 8.6 Q20 8.8 19.3 12 Q18.5 14.6 15.5 14.4 Q12 13.6 11 14 Q8.5 15.5 9.3 18.3 Q10 21 13 22 Q15.5 23 15.7 26 Q15.7 28.8 18.5 28.6 Q20.5 28.4 22 24.5 Q23 22 24 20.5 Q25.3 17.5 23 15.5 Q22 13 24.5 12.6 Q27 12.2 28 12.5 Q30 15 32.4 19.6"/></g></svg><div class="t" style="left:1625px;top:1229.3px;font-size:28.5px;line-height:28.5px;color:#232840;font-weight:400;">External Sharing</div><div class="t" style="left:1625px;top:1273.2px;font-size:28px;line-height:28px;color:#4468d0;font-weight:400;">Manage</div><div class="r" style="left:1745px;top:1276px;width:3px;height:26px;background:#a4a7b4"></div><div class="t" style="left:1770px;top:1273.2px;font-size:28px;line-height:28px;color:#4468d0;font-weight:400;">Copy link</div><svg class="r" style="left:2220px;top:1248px;" width="36" height="36" viewBox="0 0 36 36" fill="none"><g stroke="#4a5068" stroke-width="2.4" stroke-linejoin="round" stroke-linecap="round"><rect x="3" y="6" width="30" height="27" rx="4"/><path d="M3 13 L33 13"/><path d="M10 2 L10 7"/><path d="M26 2 L26 7"/></g><g fill="#4a5068"><circle cx="10" cy="24" r="1"/><circle cx="14" cy="24" r="1"/><circle cx="18" cy="24" r="1"/><circle cx="22" cy="24" r="1"/><circle cx="26" cy="24" r="1"/><circle cx="18" cy="20" r="1"/><circle cx="22" cy="20" r="1"/><circle cx="26" cy="20" r="1"/><circle cx="10" cy="28" r="1"/><circle cx="14" cy="28" r="1"/><circle cx="18" cy="28" r="1"/><circle cx="22" cy="28" r="1"/><circle cx="26" cy="28" r="1"/></g></svg><svg class="r" style="left:2293px;top:1246px;" width="32" height="40" viewBox="0 0 32 40" fill="none"><g stroke="#4a5068" stroke-width="2.4" stroke-linejoin="round" stroke-linecap="round"><path d="M8 17 L8 10 Q8 2 16 2 Q24 2 24 10 L24 17"/><rect x="3" y="17" width="26" height="20" rx="4"/><path d="M16 25 L16 29"/></g></svg><div class="r" style="left:2357px;top:1242px;width:173px;height:48px;border:2px solid #4a69d0;border-radius:24px;box-sizing:border-box"></div><div class="t" style="left:2388px;top:1252.3px;font-size:25.5px;line-height:25.5px;color:#4a69d0;font-weight:400;-webkit-text-stroke:0.3px #4a69d0;">Enabled</div><div class="r" style="left:2488px;top:1250px;width:32px;height:32px;background:#5670d0;border-radius:50%"></div>
</body></html>
